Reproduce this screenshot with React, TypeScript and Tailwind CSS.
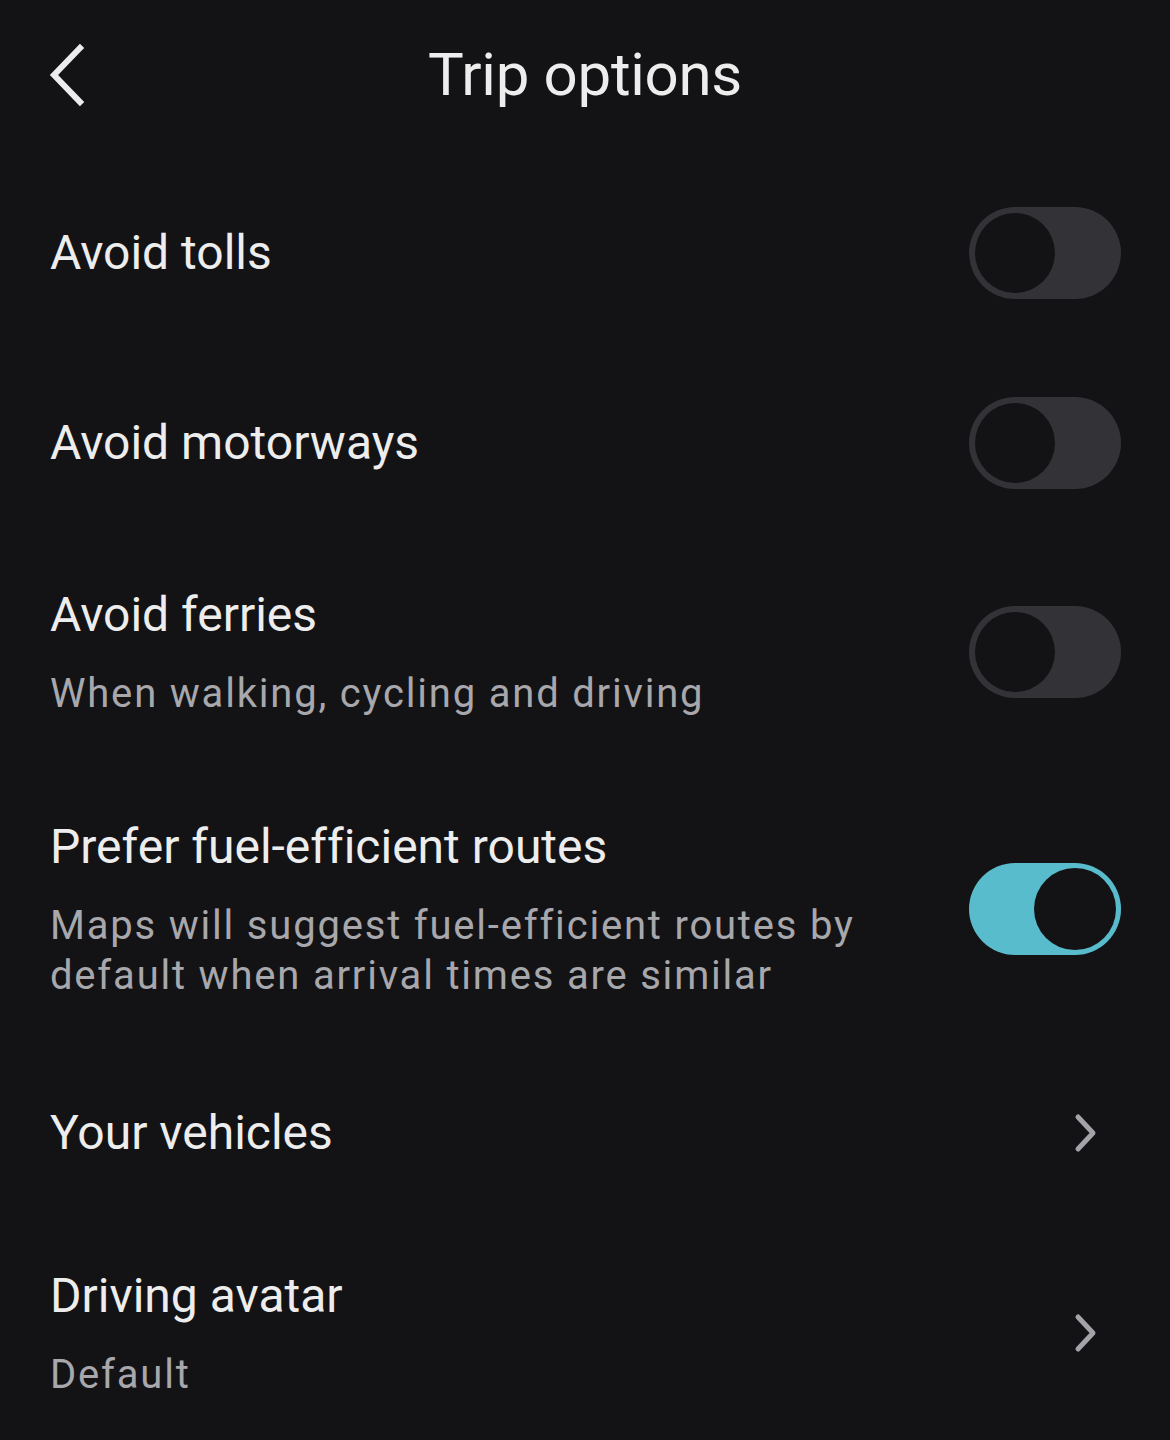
import React from "react";

const font = { fontFamily: "Roboto, 'Noto Sans', sans-serif" };

function Toggle({ on }: { on?: boolean }) {
  if (on) {
    return (
      <div className="flex h-[92px] w-[152px] shrink-0 items-center justify-end rounded-full bg-[#58bccc] pr-[5px]">
        <div className="h-[82px] w-[82px] rounded-full bg-[#131316]" />
      </div>
    );
  }
  return (
    <div className="flex h-[92px] w-[152px] shrink-0 items-center rounded-full bg-[#333337] pl-[6px]">
      <div className="h-[80px] w-[80px] rounded-full bg-[#131316]" />
    </div>
  );
}

function Chevron() {
  return (
    <svg width="30" height="42" viewBox="0 0 30 42" className="mr-[20px] shrink-0">
      <path d="M7 5 L22 21 L7 37" fill="none" stroke="#a3a3a8" strokeWidth="5" strokeLinecap="round" strokeLinejoin="round" />
    </svg>
  );
}

type Row = {
  title: string;
  sub?: string[];
  kind: "off" | "on" | "link";
  h: string;
};

const rows: Row[] = [
  { title: "Avoid tolls", kind: "off", h: "h-[206px]" },
  { title: "Avoid motorways", kind: "off", h: "h-[174px]" },
  { title: "Avoid ferries", sub: ["When walking, cycling and driving"], kind: "off", h: "h-[244px]" },
  {
    title: "Prefer fuel-efficient routes",
    sub: ["Maps will suggest fuel-efficient routes by", "default when arrival times are similar"],
    kind: "on",
    h: "h-[270px]",
  },
  { title: "Your vehicles", kind: "link", h: "h-[178px]" },
  { title: "Driving avatar", sub: ["Default"], kind: "link", h: "h-[222px]" },
];

export default function App() {
  return (
    <div className="min-h-screen w-[1170px] bg-[#131316] text-[#ededed] [font-variant-ligatures:none]" style={font}>
      <header className="relative flex h-[150px] items-center justify-center">
        <svg width="40" height="64" viewBox="0 0 40 64" className="absolute left-[46px] top-[43px]">
          <path d="M34 5 L8 32 L34 59" fill="none" stroke="#ececec" strokeWidth="6" strokeLinecap="square" />
        </svg>
        <h1 className="text-[60px] font-normal tracking-[-0.3px]">Trip options</h1>
      </header>
      <main>
        {rows.map((r) => (
          <div key={r.title} className={`flex ${r.h} items-center justify-between pl-[50px] pr-[49px]`}>
            <div>
              <div className="text-[48px] leading-[58px]">{r.title}</div>
              {r.sub && (
                <div className="mt-[25px] text-[40px] leading-[50px] tracking-[1.8px] text-[#a7a7ac]">
                  {r.sub.map((s) => (
                    <div key={s}>{s}</div>
                  ))}
                </div>
              )}
            </div>
            {r.kind === "link" ? <Chevron /> : <Toggle on={r.kind === "on"} />}
          </div>
        ))}
      </main>
    </div>
  );
}
